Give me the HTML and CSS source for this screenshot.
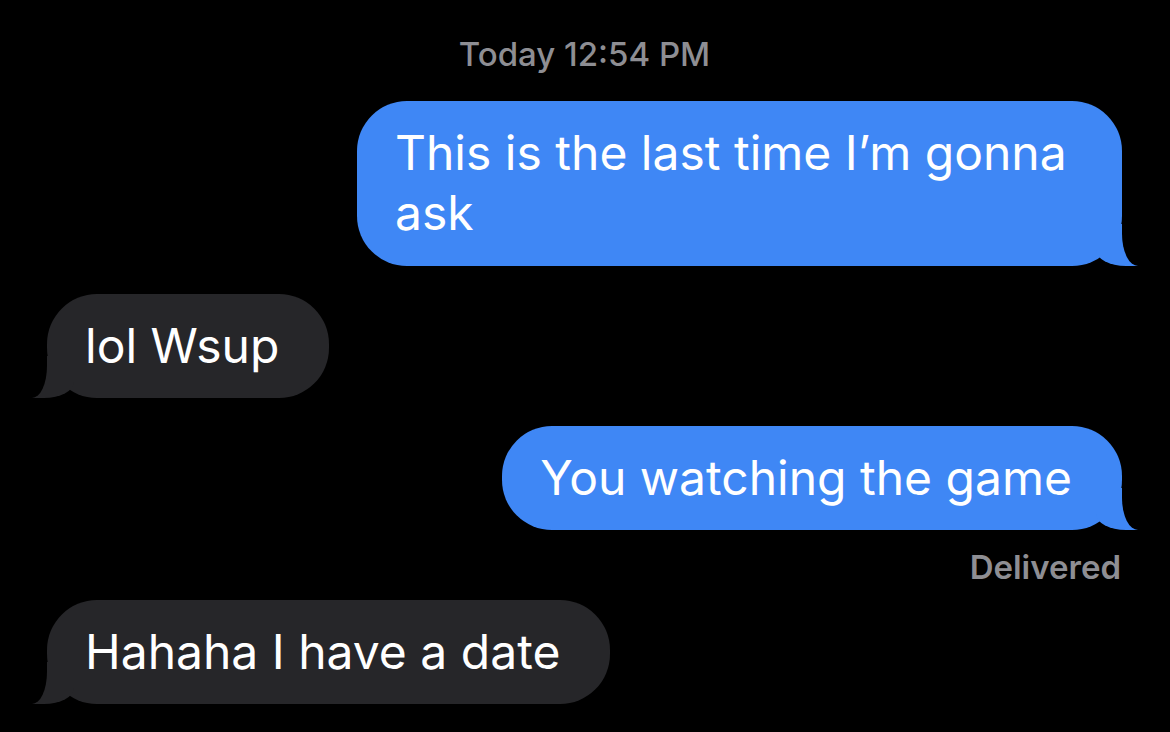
FILE: index.html
```html
<!DOCTYPE html>
<html>
  <head>
    <meta charset="utf-8">
    <title>Messages</title>
    <link rel="stylesheet" href="styles.css">
  </head>
  <body>
    <div class="thread">
      <div class="stamp">Today 12:54 PM</div>

      <div class="bubble sent first">This is the last time I’m gonna ask</div>
      <div class="bubble got">lol Wsup</div>
      <div class="bubble sent">You watching the game</div>
      <div class="status">Delivered</div>
      <div class="bubble got after-status">Hahaha I have a date</div>
    </div>
  </body>
</html>
```

FILE: styles.css
```css
html, body {
  margin: 0;
  background: #000;
}
body {
  font-family: Inter, "Noto Sans", sans-serif;
  -webkit-font-smoothing: antialiased;
}

.thread {
  display: flex;
  flex-direction: column;
  padding: 35px 48px 0 47px;
}

.stamp {
  align-self: center;
  color: #8e8e93;
  font-size: 33px;
  line-height: 38px;
  font-weight: 500;
  margin-bottom: 28px;
}

.bubble {
  position: relative;
  max-width: 765px;
  box-sizing: border-box;
  padding: 22px 50px 22px 38px;
  border-radius: 50px;
  color: #fff;
  font-size: 48px;
  line-height: 60px;
  margin-top: 28px;
}
.bubble.first {
  margin-top: 0;
  padding-bottom: 23px;
}

/* tail: coloured blob + black cut-out */
.bubble::before,
.bubble::after {
  content: "";
  position: absolute;
  bottom: 0;
  height: 42px;
}

.sent {
  align-self: flex-end;
  background: #3f87f5;
}
.sent::before {
  right: -16px;
  width: 42px;
  background: #3f87f5;
  border-bottom-left-radius: 30px 16px;
}
.sent::after {
  right: -42px;
  width: 42px;
  background: #000;
  border-bottom-left-radius: 16px 32px;
}

.got {
  align-self: flex-start;
  background: #262629;
}
.got::before {
  left: -15px;
  width: 42px;
  background: #262629;
  border-bottom-right-radius: 30px 16px;
}
.got::after {
  left: -42px;
  width: 42px;
  background: #000;
  border-bottom-right-radius: 15px 32px;
}

.status {
  align-self: flex-end;
  color: #8e8e93;
  font-size: 33px;
  line-height: 36px;
  font-weight: 600;
  margin: 19px 1px 0 0;
}
.bubble.after-status {
  margin-top: 15px;
}
```
